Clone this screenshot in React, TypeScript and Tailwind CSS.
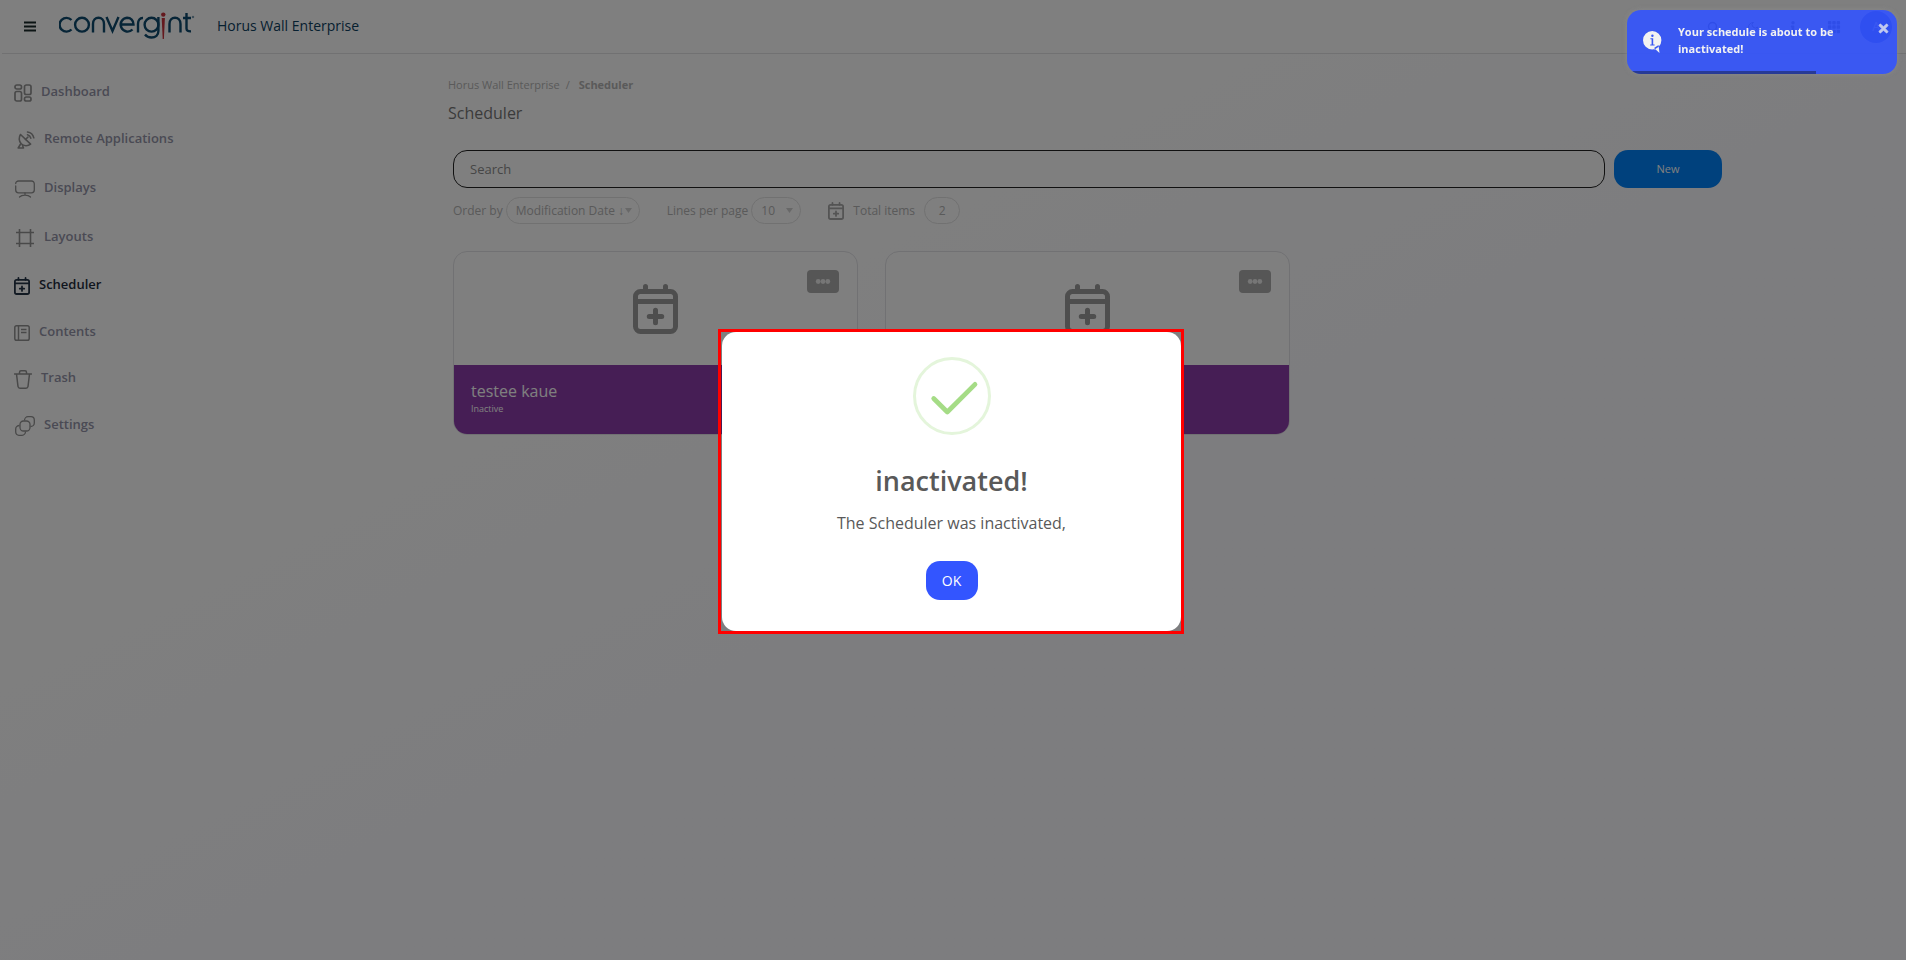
import React, { useState } from 'react';
import { LuSearch, LuMoon } from 'react-icons/lu';
import { FaInfo, FaTimes } from 'react-icons/fa';
import { BsGrid3X3GapFill } from 'react-icons/bs';

const iconClass = 'shrink-0 stroke-[#929292] fill-none';

function DashboardIcon() {
  return (
    <svg className={`w-[18px] h-[18px] ${iconClass}`} viewBox="0 0 18 18" strokeWidth="1.7">
      <rect x="1" y="1" width="6.5" height="4" rx="1.8" />
      <rect x="1" y="7.5" width="6.5" height="9.5" rx="1.8" />
      <rect x="10.5" y="1" width="6.5" height="9.5" rx="1.8" />
      <rect x="10.5" y="13" width="6.5" height="4" rx="1.8" />
    </svg>
  );
}

function RemoteIcon() {
  return (
    <svg className={`w-[21px] h-[18px] ${iconClass}`} viewBox="-3 0 21 18" strokeWidth="1.6" strokeLinecap="round" strokeLinejoin="round">
      <path d="M3.5 3.5 13.6 13.2C11 15.3 6.7 15.3 4.2 12.8 1.8 10.4 1.6 6.2 3.5 3.5Z" />
      <path d="M8.5 8.5 11 6M3.6 13 1.2 17H6.5L5.5 14.5" />
      <path d="M10.5 3.8A4.5 4.5 0 0 1 13.8 7.2M10.5 1A7.5 7.5 0 0 1 16.8 6.8" />
    </svg>
  );
}

function DisplaysIcon() {
  return (
    <svg className={`w-[21px] h-[18px] ${iconClass}`} viewBox="-1 0 21 18" strokeWidth="1.3" strokeLinecap="round">
      <path d="M.7 6V10C.7 11.8 2 12.8 3.5 12.8H16.5C18 12.8 19.3 11.8 19.3 10V4C19.3 2 18 1 16.5 1H3.5C2 1 .7 2 .7 3.5" />
      <path d="M10 13V15M4.5 17C6 15.5 8 15.2 10 15.2S14 15.5 15.5 17" />
    </svg>
  );
}

function LayoutsIcon() {
  return (
    <svg className={`w-[21px] h-[18px] ${iconClass}`} viewBox="-2 0 21 18" strokeWidth="1.6">
      <path d="M3.5 0V18M14.5 0V18M0 3.5H18M0 14.5H18" />
    </svg>
  );
}

function CalendarPlusIcon({ className }: { className: string }) {
  return (
    <svg className={`shrink-0 fill-none ${className}`} viewBox="0 0 18 20" strokeWidth="2" strokeLinecap="round" strokeLinejoin="round">
      <rect x="1" y="3" width="16" height="16" rx="2" />
      <path d="M1 7H17M5 1V3M13 1V3M9 10.5V15.5M6.5 13H11.5" />
    </svg>
  );
}

function ContentsIcon() {
  return (
    <svg className={`w-4 h-4 ${iconClass}`} viewBox="0 0 16 16" strokeWidth="1.5">
      <rect x=".8" y=".8" width="14.4" height="14.4" rx="1.8" />
      <path d="M4.5 1V15M7 4.5H12.5M7 7.5H12.5" />
    </svg>
  );
}

function TrashIcon() {
  return (
    <svg className={`w-[18px] h-[19px] ${iconClass}`} viewBox="0 0 18 19" strokeWidth="1.5" strokeLinecap="round" strokeLinejoin="round">
      <path d="M.5 4H17.5M5.5 4V2.5C5.5 1.5 6 .8 7 .8H11C12 .8 12.5 1.5 12.5 2.5V4M2.5 4 4 16.5C4.2 17.7 4.8 18.2 6 18.2H12C13.2 18.2 13.8 17.7 14 16.5L15.5 4" />
    </svg>
  );
}

function SettingsIcon() {
  return (
    <svg className={`w-[21px] h-5 ${iconClass}`} viewBox="-1 0 21 20" strokeWidth="1.3">
      <rect x="5" y="5" width="10" height="10" rx="3.5" />
      <path d="M9.5 4.5C9.5 2.5 11 .7 13 .7H16C18 .7 19.3 2 19.3 4V7C19.3 9 17.5 10.5 15.5 10.5" />
      <path d="M10.5 15.5C10.5 17.5 9 19.3 7 19.3H4C2 19.3 .7 18 .7 16V13C.7 11 2.5 9.5 4.5 9.5" />
    </svg>
  );
}

function Logo() {
  return (
    <svg className="w-[136px] h-7 shrink-0 fill-none" viewBox="0 0 136 28" strokeWidth="2.4" stroke="#0f4a6e" role="img" aria-label="convergint">
      <path d="M12.5 8A6.9 6.9 0 1 0 12.5 17.5" />
      <circle cx="23" cy="12.7" r="6.9" />
      <path d="M34 20.5V12C34 8 36.5 5.8 39.5 5.8S45 8 45 12V20.5" />
      <path d="M47.5 5 53.5 19 59.5 5" />
      <path d="M61.5 12.5H74.5C74.5 8.5 71.8 5.8 68 5.8A6.9 6.9 0 1 0 73.5 17.5" />
      <path d="M79 20.5V12C79 8 81 5.8 84 6" />
      <circle cx="92.5" cy="12.7" r="6.9" />
      <path d="M99.4 5V19C99.4 23 96.5 25.5 92.5 25.5 89.5 25.5 87.5 24.5 86 22.5" />
      <path d="M110.5 20.5V12C110.5 8 113 5.8 116 5.8S121.5 8 121.5 12V20.5" />
      <path d="M127.5 1V16.5C127.5 18.5 129 19.5 132 19.3M124 6H132" />
      <path d="M102.7 6H105.9L104.9 27H103.7Z" fill="#c8323c" stroke="none" />
      <circle cx="104.3" cy="2.6" r="2.2" fill="#c8323c" stroke="none" />
      <circle cx="134" cy="5" r=".8" strokeWidth=".6" />
    </svg>
  );
}

const menu = [
  { label: 'Dashboard', icon: <DashboardIcon />, height: 'h-[46px]' },
  { label: 'Remote Applications', icon: <RemoteIcon />, height: 'h-12' },
  { label: 'Displays', icon: <DisplaysIcon />, height: 'h-[50px]' },
  { label: 'Layouts', icon: <LayoutsIcon />, height: 'h-12' },
  { label: 'Scheduler', icon: <CalendarPlusIcon className="w-4 h-[18px] stroke-[#243447]" />, height: 'h-12', active: true },
  { label: 'Contents', icon: <ContentsIcon />, height: 'h-[46px]' },
  { label: 'Trash', icon: <TrashIcon />, height: 'h-[46px]' },
  { label: 'Settings', icon: <SettingsIcon />, height: 'h-12' },
];

function Header() {
  return (
    <header className="ml-0.5 flex h-[54px] items-center border-b border-[#e2e2e4] bg-white pl-[22px] pr-[14px]">
      <button aria-label="Toggle menu" className="shrink-0">
        <svg className="h-[11px] w-3 stroke-[#1a2a2a]" viewBox="0 0 12 11" strokeWidth="2">
          <path d="M0 1.5H12M0 5.5H12M0 9.5H12" />
        </svg>
      </button>
      <a href="#" className="ml-[23px] mb-0.5"><Logo /></a>
      <span className="ml-[22px] mb-0.5 text-sm font-medium text-[#0c4060]">Horus Wall Enterprise</span>
      <div className="ml-auto flex items-center gap-7 text-[#14202e]">
        <button aria-label="Search items"><LuSearch className="h-3 w-3" strokeWidth={3} /></button>
        <button aria-label="Dark mode"><LuMoon className="h-3 w-3" /></button>
        <button aria-label="Information"><FaInfo className="h-3 w-3" /></button>
        <button aria-label="Applications"><BsGrid3X3GapFill className="h-[14px] w-[14px]" /></button>
        <button className="-ml-[9px] h-8 w-8 rounded-full bg-[#2040d8] text-xs text-white">A</button>
      </div>
    </header>
  );
}

function Sidebar() {
  return (
    <nav className="w-[264px] shrink-0 pl-[14px] pt-4">
      {menu.map((item) => (
        <a key={item.label} href="#" className={`flex items-center gap-[9px] text-[13px] font-semibold ${item.height} ${item.active ? 'text-[#1f2c3d]' : 'text-[#9494a8]'}`}>
          {item.icon}
          <span className="pb-[3px]">{item.label}</span>
        </a>
      ))}
    </nav>
  );
}

function Caret() {
  return (
    <svg className="pointer-events-none absolute right-2 h-[5px] w-[7px] fill-[#d0d0d0]" viewBox="0 0 7 5">
      <path d="M0 0H7L3.5 5Z" />
    </svg>
  );
}

function Filters() {
  return (
    <div className="mt-[9px] flex items-center pl-[5px] text-xs text-[#b4b4b4]">
      <label htmlFor="order">Order by</label>
      <div className="relative ml-[3px] flex items-center">
        <select id="order" className="h-[27px] w-[134px] appearance-none rounded-full border border-[#e2e2e2] pl-[9px]">
          <option>Modification Date ↓</option>
        </select>
        <Caret />
      </div>
      <label htmlFor="lines" className="ml-[27px]">Lines per page</label>
      <div className="relative ml-[3px] flex items-center">
        <select id="lines" className="h-[27px] w-[50px] appearance-none rounded-full border border-[#e2e2e2] pl-[9px]">
          <option>10</option>
        </select>
        <Caret />
      </div>
      <CalendarPlusIcon className="ml-[27px] h-[18px] w-4 stroke-[#a8a8a8]" />
      <span className="ml-[9px]">Total items</span>
      <span className="ml-[9px] flex h-[27px] w-9 items-center justify-center rounded-full border border-[#e2e2e2]">2</span>
    </div>
  );
}

function ScheduleCard({ name, status }: { name?: string; status?: string }) {
  return (
    <article className="relative w-[405px] overflow-hidden rounded-[14px] border border-[#e2e2e6] bg-white">
      <button aria-label="Schedule options" className="absolute top-[18px] right-[18px] flex h-[23px] w-8 items-center justify-center rounded bg-[#acacac]">
        <svg className="h-4 w-4 fill-[#ececec]" viewBox="0 0 16 16">
          <circle cx="3.2" cy="7.5" r="2.4" />
          <circle cx="8" cy="7.5" r="2.4" />
          <circle cx="12.8" cy="7.5" r="2.4" />
        </svg>
      </button>
      <div className="flex h-[113px] items-center justify-center">
        <CalendarPlusIcon className="w-[45px] h-[50px] stroke-[#9c9c9c]" />
      </div>
      <div className="h-[69px] bg-[#8c3caa] px-[17px] pt-[15px] text-white">
        {name && <h2 className="text-base font-medium leading-[22px]">{name}</h2>}
        {status && <p className="text-[9px] font-medium leading-[14px]">{status}</p>}
      </div>
    </article>
  );
}

function Toast({ onClose }: { onClose: () => void }) {
  return (
    <div role="status" className="fixed top-[10px] right-[9px] z-30 flex h-16 w-[270px] overflow-hidden rounded-[14px] bg-[#3355ff] text-white opacity-90 shadow-[0_0_5px_#8c8c8c]">
      <svg className="absolute left-4 top-[21px] h-[22px] w-[19px]" viewBox="0 0 19 22">
        <path d="M9.2 0A9.2 9.2 0 1 1 9.2 18.4 9.2 9.2 0 0 1 9.2 0ZM11 17 16.5 22 15.5 14Z" fill="#fff" />
        <path d="M7.4 7.2H10.2V13.6H11.6V14.6H7.2V13.6H8.6V8.2H7.4Z" fill="#3355ff" />
        <circle cx="9.4" cy="4.8" r="1.2" fill="#3355ff" />
      </svg>
      <p className="pl-[51px] pr-10 pt-[13px] text-[11px] font-bold leading-[17px]">Your schedule is about to be inactivated!</p>
      <button aria-label="Close" onClick={onClose} className="absolute right-[7px] top-3 opacity-80">
        <FaTimes className="h-[13px] w-[13px] stroke-white" strokeWidth={30} />
      </button>
      <div className="absolute bottom-0 left-0 h-[3px] w-[70%] bg-black/40" />
    </div>
  );
}

function Modal({ onClose }: { onClose: () => void }) {
  return (
    <div className="fixed inset-0 z-20 flex items-center justify-center pr-1 pt-[3px]">
      <div className="border-[3px] border-[#ff0000] pl-px">
        <div role="dialog" aria-labelledby="dialog-title" className="flex w-[459px] flex-col items-center rounded-[14px] bg-white pt-[25px] pb-[31px] text-[#595959]">
          <svg className="h-[78px] w-[78px] fill-none" viewBox="0 0 78 78">
            <circle cx="39" cy="39" r="37.5" stroke="#e4f5db" strokeWidth="3" />
            <path d="M20.7 41.5 34.3 55 62 27.3" stroke="#a5dc86" strokeWidth="4.7" strokeLinecap="round" strokeLinejoin="round" />
          </svg>
          <h2 id="dialog-title" className="mt-[26px] text-[27px] font-semibold leading-10">inactivated!</h2>
          <p className="mt-[10px] text-base leading-6">The Scheduler was inactivated,</p>
          <button onClick={onClose} className="mt-[26px] h-[39px] w-[52px] rounded-[14px] bg-[#3355ff] text-sm font-medium text-white">OK</button>
        </div>
      </div>
    </div>
  );
}

export default function App() {
  const [showToast, setShowToast] = useState(true);
  const [showModal, setShowModal] = useState(true);

  return (
    <div className="min-h-screen bg-linear-to-br from-white from-30% to-[#fafafe] to-60% font-['Open_Sans','Liberation_Sans',sans-serif]">
      <Header />
      <div className="flex">
        <Sidebar />
        <main className="flex-1">
          <div className="mx-auto max-w-[1274px] pt-[23px]">
            <nav className="flex text-[11px] leading-4 text-[#b4b4b4]">
              <a href="#">Horus Wall Enterprise</a>
              <span className="ml-[6px]">/</span>
              <span className="ml-[9px] font-bold">Scheduler</span>
            </nav>
            <h1 className="mt-[10px] text-base leading-5 text-[#777]">Scheduler</h1>
            <div className="mt-[27px] flex gap-[9px] pl-[5px]">
              <input
                type="text"
                aria-label="Search"
                placeholder="Search"
                className="h-[38px] min-w-0 flex-1 rounded-[14px] border border-[#222] bg-white px-4 text-[13px] placeholder:text-[#8c8c8c]"
              />
              <button className="h-[38px] w-[108px] rounded-[14px] bg-[#0082fa] text-[11px] font-medium text-white">New</button>
            </div>
            <Filters />
            <div className="mt-[27px] flex flex-wrap gap-[27px] pl-[5px]">
              <ScheduleCard name="testee kaue" status="Inactive" />
              <ScheduleCard />
            </div>
          </div>
        </main>
      </div>

      {showModal && <div className="fixed inset-0 z-10 bg-black/50" />}
      {showModal && <Modal onClose={() => setShowModal(false)} />}
      {showToast && <Toast onClose={() => setShowToast(false)} />}
    </div>
  );
}
